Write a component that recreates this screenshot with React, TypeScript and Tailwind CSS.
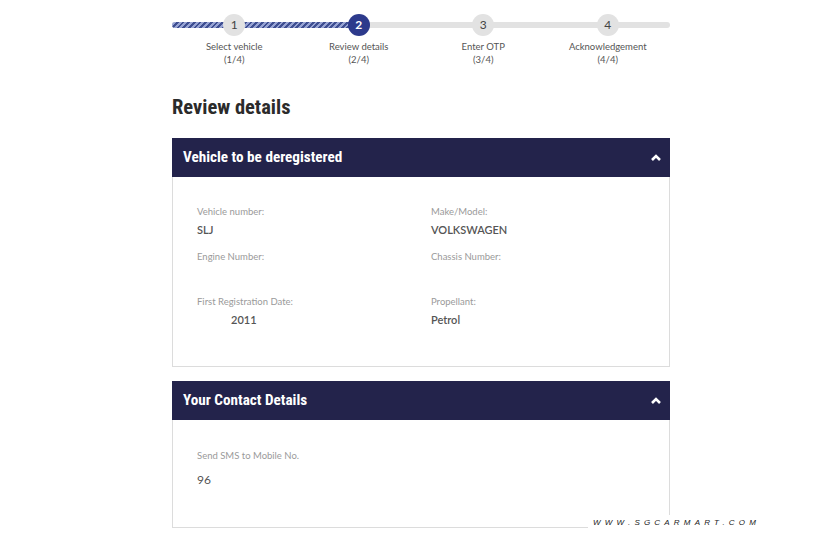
import React from "react";

const steps = [
  { n: 1, label: "Select vehicle", sub: "(1/4)", current: false },
  { n: 2, label: "Review details", sub: "(2/4)", current: true },
  { n: 3, label: "Enter OTP", sub: "(3/4)", current: false },
  { n: 4, label: "Acknowledgement", sub: "(4/4)", current: false },
];

function Chevron() {
  return (
    <svg width="10" height="7" viewBox="0 0 10 7" className="mr-[3px]">
      <path d="M1 6 L5 2 L9 6" stroke="white" strokeWidth="2.6" fill="none" />
    </svg>
  );
}

function Stepper() {
  return (
    <div className="relative w-[498px]">
      <div className="absolute left-0 right-0 top-[8px] flex h-[6px] overflow-hidden rounded-full bg-[#e2e2e2]">
        <div className="h-full w-[188px] bg-[repeating-linear-gradient(-45deg,#3f4f92_0px,#3f4f92_2px,#97a3d3_2px,#97a3d3_4px)]" />
      </div>
      <div className="relative grid grid-cols-4 font-['Lato',sans-serif]">
        {steps.map((s) => (
          <div key={s.n} className="flex flex-col items-center">
            <div
              className={
                s.current
                  ? "flex h-[22px] w-[22px] items-center justify-center rounded-full bg-[#2d3a8c] text-[12px] font-bold text-white"
                  : "flex h-[22px] w-[22px] items-center justify-center rounded-full bg-[#e2e2e2] text-[12px] text-[#444]"
              }
            >
              {s.n}
            </div>
            <div className="mt-[4px] text-center text-[9.5px] leading-[13px] text-[#555]">
              <div>{s.label}</div>
              <div>{s.sub}</div>
            </div>
          </div>
        ))}
      </div>
    </div>
  );
}

function Panel({ title, children }: { title: string; children: React.ReactNode }) {
  return (
    <section className="w-[498px]">
      <div className="flex h-[39px] items-center justify-between bg-[#23234b] pl-[11px] pr-[6px]">
        <h2 className="font-['Roboto_Condensed',Roboto,sans-serif] text-[15.2px] font-bold text-white font-stretch-condensed">
          {title}
        </h2>
        <Chevron />
      </div>
      <div className="border border-t-0 border-[#dcdcdc] font-['Lato',sans-serif]">{children}</div>
    </section>
  );
}

function Field({ label, value, indent }: { label: string; value?: string; indent?: boolean }) {
  return (
    <div>
      <div className="text-[9.5px] leading-[14px] text-[#9a9a9a]">{label}</div>
      <div
        className={
          indent
            ? "mt-[3px] h-[16px] pl-[34px] text-[11px] font-semibold leading-[16px] text-[#555]"
            : "mt-[3px] h-[16px] text-[11px] font-semibold leading-[16px] text-[#555]"
        }
      >
        {value}
      </div>
    </div>
  );
}

export default function App() {
  return (
    <div className="relative h-[552px] w-[828px] overflow-hidden bg-white">
      <div className="pl-[172px] pt-[14px]">
        <Stepper />

        <h1 className="mt-[27px] font-['Roboto_Condensed',Roboto,sans-serif] text-[20.5px] font-bold leading-[28px] text-[#2b2b2b] font-stretch-condensed">
          Review details
        </h1>

        <div className="mt-[17px] flex flex-col gap-[14px]">
          <Panel title="Vehicle to be deregistered">
            <div className="grid grid-cols-[234px_1fr] gap-y-[12px] pb-[38px] pl-[24px] pt-[28px]">
              <Field label="Vehicle number:" value="SLJ" />
              <Field label="Make/Model:" value="VOLKSWAGEN" />
              <Field label="Engine Number:" />
              <Field label="Chassis Number:" />
              <Field label="First Registration Date:" value="2011" indent />
              <Field label="Propellant:" value="Petrol" />
            </div>
          </Panel>

          <Panel title="Your Contact Details">
            <div className="pb-[39px] pl-[24px] pt-[29px]">
              <div className="text-[9.5px] leading-[14px] text-[#9a9a9a]">Send SMS to Mobile No.</div>
              <div className="mt-[9px] text-[12px] leading-[16px] text-[#555]">96</div>
            </div>
          </Panel>
        </div>
      </div>

      <div className="absolute left-[588px] top-[515px] bg-white py-[2px] pl-[5px] pr-[10px] font-['Liberation_Sans',Arial,sans-serif] text-[8px] italic tracking-[4.2px] text-[#222]">
        WWW.SGCARMART.COM
      </div>
    </div>
  );
}
